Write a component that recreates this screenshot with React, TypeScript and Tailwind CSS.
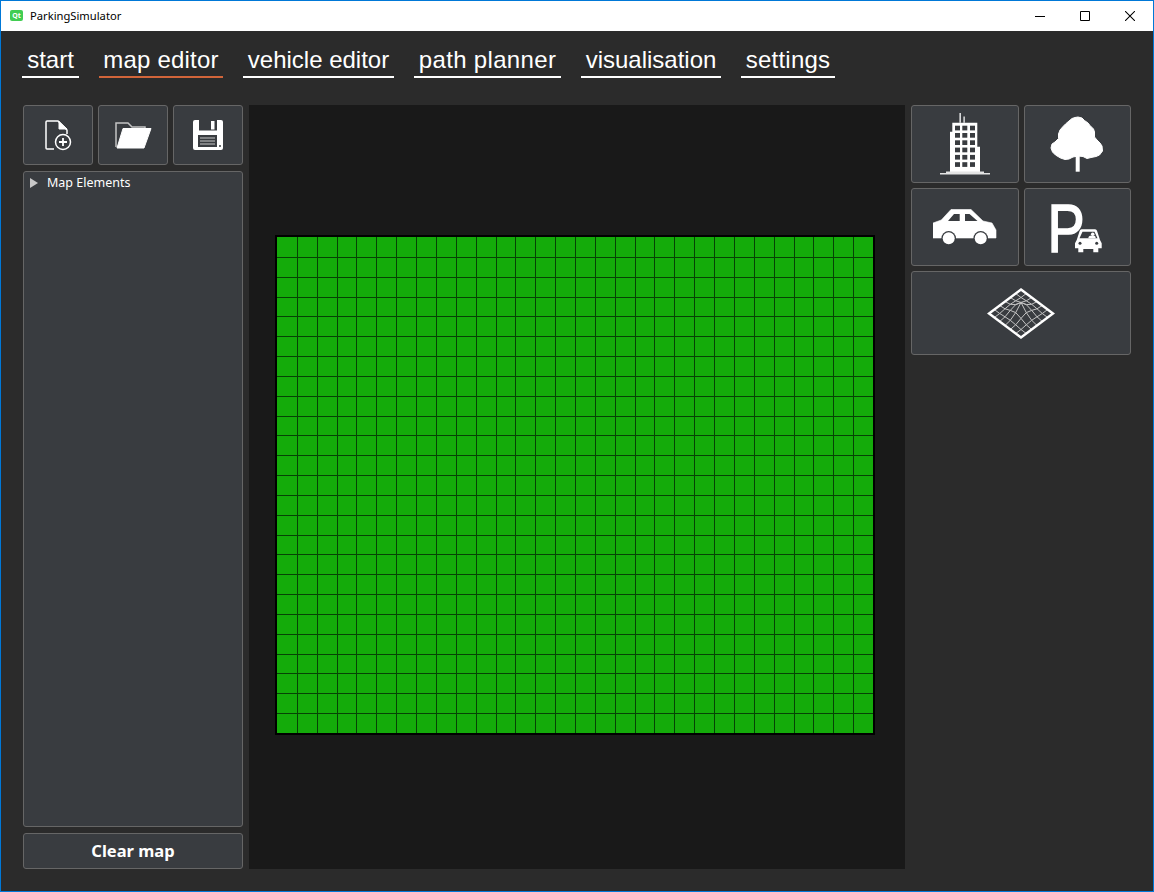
import type { ReactNode } from 'react'

const tabs = [
  { label: 'start', className: 'w-[57px]' },
  { label: 'map editor', className: 'w-[124px] tracking-[0.2px]', active: true },
  { label: 'vehicle editor', className: 'w-[151px]' },
  { label: 'path planner', className: 'w-[147px] tracking-[0.33px]' },
  { label: 'visualisation', className: 'w-[140px]' },
  { label: 'settings', className: 'w-[94px] tracking-[0.25px]' },
]

const panel = 'bg-[#393c40] border border-[#666666] rounded-[3px] flex items-center justify-center'

function ToolButton({ className = '', children }: { className?: string; children: ReactNode }) {
  return <button className={`${panel} ${className}`}>{children}</button>
}

function NewFileIcon() {
  return (
    <svg width="32" height="32" viewBox="0 0 32 32" fill="none" stroke="#fff" strokeWidth="1.5">
      <path d="M12 30H5a1 1 0 0 1-1-1V3a1 1 0 0 1 1-1h11l9 9v4" />
      <path d="M17 2.5V10h8z" fill="#fff" strokeWidth="1" />
      <circle cx="21" cy="23" r="7.5" />
      <path d="M21 19v8M17 23h8" strokeWidth="1.8" />
    </svg>
  )
}

function FolderIcon() {
  return (
    <svg width="38" height="28" viewBox="0 0 38 28">
      <path d="M2 26V2h12l4 4h13v2" fill="none" stroke="#c4c4c4" strokeWidth="1.5" />
      <path d="M9 7.500h28L30 27H3z" fill="#fff" stroke="#fff" strokeLinejoin="round" />
    </svg>
  )
}

function SaveIcon() {
  return (
    <svg width="30" height="30" viewBox="0 0 30 30">
      <path d="M2 0h26a2 2 0 0 1 2 2v26a2 2 0 0 1-2 2H2a2 2 0 0 1-2-2V2a2 2 0 0 1 2-2z" fill="#fff" />
      <path d="M6 0h18v10.500H6z" fill="#393c40" />
      <path d="M18 1h3.500v8.500H18z" fill="#fff" />
      <path d="M5 15h19v12H5z" fill="#393c40" />
      <path d="M7 17.500h15v1H7zM7 20.500h15v1H7zM7 23.500h15v1H7z" fill="#c8c8c8" />
      <circle cx="27" cy="26" r="1" fill="#393c40" />
    </svg>
  )
}

function BuildingIcon() {
  const windows = []
  for (const y of [12.7, 20, 27.3, 34.6, 41.9, 49.2]) {
    for (const x of [15, 22.3, 30]) {
      windows.push(<rect key={`${x}-${y}`} x={x} y={y} width="5" height="4.700" fill="#393c40" />)
    }
  }
  return (
    <svg width="50" height="62" viewBox="0 0 50 62" fill="#fff">
      <path d="M19.500 9.700V0h1.300v9.700zM23.500 9.700V3.500h1.200v6.200z" />
      <path d="M12.300 9.700H37.300V33.700H40V59H10V18.700H12.300z" />
      <path d="M6 58.500h38V60h6v1.500H0V60h6z" fill="#e4e4e4" />
      {windows}
    </svg>
  )
}

function TreeIcon() {
  return (
    <svg width="65" height="68" viewBox="0 0 65 68" fill="#fff">
      <path d="M30.700 45h4v16.700h-4z" />
      <path
        d="M33 7 37 8 39.500 10.500 43 13 45 15.500 48.500 19 49.500 22 49.500 27 52 30 55 33 57 36 57.500 41 54.500 45 51 46.500 46 47.500 42 48.500 38 46.500 33 46 28 47 24 49 20 49.500 15.500 48 10.500 45 7.500 42 6 38 7 34 10 32 13.500 28.500 13.500 24 15 20 18 16.500 20.500 14 24 11 27 8.500 30 7.500z"
        stroke="#fff"
        strokeWidth="1"
        strokeLinejoin="round"
      />
    </svg>
  )
}

function CarIcon() {
  return (
    <svg width="64" height="37" viewBox="0 0 64 37">
      <path
        d="M8.300 11 18 .5h20L50 12l9 2 4 7v8H0V14z"
        fill="#fff"
        stroke="#fff"
        strokeWidth="0.600"
        strokeLinejoin="round"
      />
      <path d="M15 12 21 5h5.700v7zM32 5h4.500l8 7H32z" fill="#393c40" />
      <circle cx="15.700" cy="29.300" r="7.300" fill="#393c40" />
      <circle cx="47.700" cy="29.300" r="7.300" fill="#393c40" />
      <circle cx="15.700" cy="29.300" r="6" fill="#fff" />
      <circle cx="47.700" cy="29.300" r="6" fill="#fff" />
    </svg>
  )
}

function ParkingIcon() {
  return (
    <svg width="55" height="51" viewBox="0 0 55 51" className="overflow-visible">
      <text
        transform="translate(-2.500 49.500) scale(.82 1)"
        fontSize="68"
        fontFamily="'Liberation Sans', sans-serif"
        fill="#fff"
        stroke="#fff"
        strokeWidth="1.600"
      >
        P
      </text>
      <path
        d="M31.700 27.300H45a2 2 0 0 1 2 1.500L50 38l1.700 3.300v5H48.300v4h-5v-3.300h-10v3.300h-5v-4H25v-5L26.700 38l3-9.200a2 2 0 0 1 2-1.500z"
        fill="#fff"
      />
      <path d="M29.500 36.300l3-6.600h12l3 6.600z" fill="#393c40" />
      <circle cx="42.700" cy="32.300" r="1.800" fill="#fff" />
      <path d="M38.300 36.300c0-2 1.500-2.500 2.500-2.500h3.500c1 0 1.400 1 1.400 2.500z" fill="#fff" />
      <circle cx="30" cy="41.300" r="1.500" fill="#393c40" />
      <circle cx="46.700" cy="41.300" r="1.500" fill="#393c40" />
    </svg>
  )
}

// wire mesh: 6x6 grid pushed up in the middle, then flattened into a diamond
function TerrainIcon() {
  const n = 6
  const pt = (i: number, j: number) => {
    const u = i / n
    const v = j / n
    const d = Math.hypot(u - 0.5, v - 0.5)
    const lift = 11 * Math.max(0, 1 - d / 0.5) ** 2
    return `${(34 + (u - v) * 32).toFixed(1)} ${(26.5 + (u + v - 1) * 24 - lift).toFixed(1)}`
  }
  const lines: string[] = []
  for (let a = 1; a < n; a++) {
    const row = []
    const col = []
    for (let b = 0; b <= n; b++) {
      row.push(pt(a, b))
      col.push(pt(b, a))
    }
    lines.push(`M${row.join('L')}`, `M${col.join('L')}`)
  }
  return (
    <svg width="68" height="53" viewBox="0 0 68 53" fill="none">
      <path d={lines.join('')} stroke="#c4c4c4" strokeWidth="1" />
      <path d="M34 2.500 66 26.500 34 50.500 2 26.500z" stroke="#fff" strokeWidth="2.400" strokeLinejoin="miter" />
    </svg>
  )
}

function WindowControls() {
  return (
    <div className="flex items-center h-full">
      <button className="w-[45px] h-full flex items-center justify-center">
        <svg width="10" height="10" viewBox="0 0 10 10">
          <path d="M0 5.500h10" stroke="#000" />
        </svg>
      </button>
      <button className="w-[45px] h-full flex items-center justify-center">
        <svg width="10" height="10" viewBox="0 0 10 10" fill="none">
          <path d="M.5.500h9v9h-9z" stroke="#000" />
        </svg>
      </button>
      <button className="w-[46px] h-full flex items-center justify-center">
        <svg width="10" height="10" viewBox="0 0 10 10" fill="none">
          <path d="M0 0l10 10M10 0 0 10" stroke="#000" strokeWidth="1.050" />
        </svg>
      </button>
    </div>
  )
}

export default function App() {
  const cells = Array.from({ length: 30 * 25 })

  return (
    <div className="w-[1154px] h-[892px] border border-[#0078d7] flex flex-col font-['Noto_Sans',sans-serif] overflow-hidden">
      {/* Title bar */}
      <div className="h-[30px] shrink-0 bg-white flex items-center justify-between">
        <div className="flex items-center pl-[9px]">
          <span className="w-[13px] h-[11px] bg-[#41cd52] rounded-[2px] text-white text-[7px] leading-[11px] font-bold text-center">
            Qt
          </span>
          <span className="ml-[7px] text-[11.2px] text-black">ParkingSimulator</span>
        </div>
        <div className="h-full">
          <WindowControls />
        </div>
      </div>

      <div className="flex-1 bg-[#2b2b2b] px-[22px] pt-[15px] pb-[22px] flex flex-col">
        {/* Tabs */}
        <div className="flex gap-5 -ml-px h-[32px] shrink-0 font-['Liberation_Sans',sans-serif]">
          {tabs.map(tab => (
            <div
              key={tab.label}
              className={`${tab.className} border-b-2 text-center text-white text-[24px] leading-[28px] ${
                tab.active ? 'border-[#d2653a]' : 'border-white'
              }`}
            >
              {tab.label}
            </div>
          ))}
        </div>

        <div className="mt-[27px] flex-1 flex gap-[6px] min-h-0">
          {/* Left column */}
          <div className="w-[220px] flex flex-col gap-[6px]">
            <div className="flex gap-[5px] h-[60px]">
              <ToolButton className="w-[70px]"><NewFileIcon /></ToolButton>
              <ToolButton className="w-[70px]"><FolderIcon /></ToolButton>
              <ToolButton className="w-[70px]"><SaveIcon /></ToolButton>
            </div>
            <div className="flex-1 bg-[#393c40] border border-[#666666] rounded-[3px] pl-[6px] pt-[3px]">
              <div className="flex items-center gap-[9px] h-[16px]">
                <span className="w-0 h-0 border-y-[5.5px] border-y-transparent border-l-[8px] border-l-[#c8c8c8]" />
                <span className="text-[12.5px] leading-[16px] text-white">Map Elements</span>
              </div>
            </div>
            <button className={`${panel} h-[36px] pt-px text-white text-[16.5px] font-bold`}>Clear map</button>
          </div>

          {/* Map canvas */}
          <div className="w-[656px] bg-[#191919] pl-[26px] pt-[130px]">
            <div className="w-[600px] h-[500px] border-2 border-black bg-black grid grid-cols-[repeat(30,1fr)] grid-rows-[repeat(25,1fr)]">
              {cells.map((_, i) => (
                <div
                  key={i}
                  className={`bg-[#14ab0a] border-[#064205] ${i % 30 === 0 ? '' : 'border-l'} ${i < 30 ? '' : 'border-t'}`}
                />
              ))}
            </div>
          </div>

          {/* Right column */}
          <div className="w-[220px] grid grid-cols-[108px_107px] grid-rows-[78px_78px_84px] gap-[5px] content-start">
            <ToolButton><BuildingIcon /></ToolButton>
            <ToolButton><TreeIcon /></ToolButton>
            <ToolButton><CarIcon /></ToolButton>
            <ToolButton><ParkingIcon /></ToolButton>
            <ToolButton className="col-span-2"><TerrainIcon /></ToolButton>
          </div>
        </div>
      </div>
    </div>
  )
}
